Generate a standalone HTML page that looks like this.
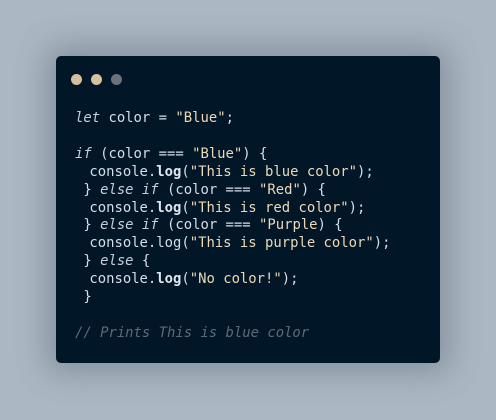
<!DOCTYPE html>
<html><head><style>
html,body{margin:0;width:496px;height:420px;overflow:hidden;background:#abb7c2;}
.card{position:absolute;left:56px;top:56px;width:384px;height:307px;background:#011627;border-radius:5px;box-shadow:0 0 30px 10px rgba(90,105,120,0.45);}
.dot{position:absolute;top:18px;width:11px;height:11px;border-radius:50%;}
pre{position:absolute;left:19px;top:54px;margin:0;font-family:"DejaVu Sans Mono","Liberation Mono",monospace;font-size:13.9px;line-height:17.9px;color:#d6deeb;}
i{color:#c5cfdc;}
.s{color:#ecd9b8;}
b{font-weight:bold;color:#dfe6f0;}
.c{color:#5c6b78;font-style:italic;}
.p{display:inline-block;width:6px;}
</style></head><body>
<div class="card">
<div class="dot" style="left:15px;background:#d6bf9c"></div>
<div class="dot" style="left:35px;background:#d8c1a0"></div>
<div class="dot" style="left:55px;background:#6a737b"></div>
<pre><i>let</i> color = <span class="s">"Blue"</span>;

<i>if</i> (color === <span class="s">"Blue"</span>) {
 <span class="p"></span>console.<b>log</b>(<span class="s">"This is blue color"</span>);
 } <i>else if</i> (color === <span class="s">"Red"</span>) {
 <span class="p"></span>console.<b>log</b>(<span class="s">"This is red color"</span>);
 } <i>else if</i> (color === <span class="s">"Purple</span>) {
 <span class="p"></span>console.log(<span class="s">"This is purple color"</span>);
 } <i>else</i> {
 <span class="p"></span>console.<b>log</b>(<span class="s">"No color!"</span>);
 }

<span class="c">// Prints This is blue color</span></pre>
</div>
</body></html>
